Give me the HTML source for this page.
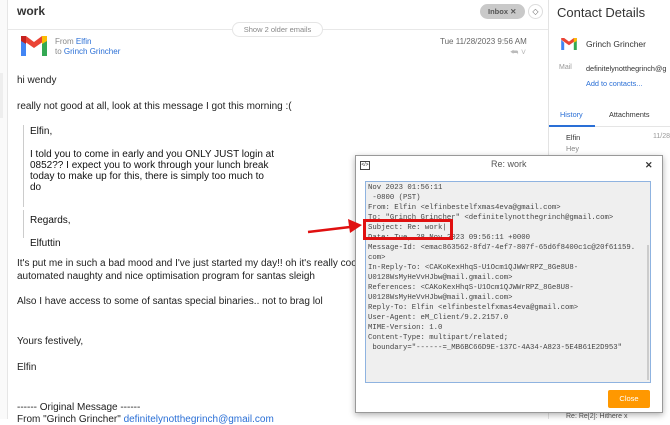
<!DOCTYPE html>
<html><head><meta charset="utf-8"><style>
*{margin:0;padding:0;box-sizing:border-box}
body{width:670px;height:419px;overflow:hidden;background:#fff;font-family:"Liberation Sans",sans-serif;position:relative;color:#222}
.a{position:absolute;white-space:nowrap}
.body{font-size:10px;color:#222}
.mono{font-family:"Liberation Mono",monospace;font-size:7.3px;line-height:10px;color:#444;white-space:pre}
a,.lnk{color:#2a6fd6}
</style></head><body>
<div class="a" style="left:0;top:0;width:8px;height:419px;border-right:1px solid #e6e6e6;background:#fafafa"></div>
<div class="a" style="left:0;top:73px;width:3px;height:45px;background:#eee"></div>
<div class="a" style="left:17px;top:4px;font-size:12px;font-weight:bold;color:#333">work</div>
<div class="a" style="left:8px;top:29px;width:540px;border-top:1px solid #e8e8e8"></div>
<div class="a" style="left:232px;top:22px;width:91px;height:15px;border:1px solid #e5e5e5;border-radius:8px;background:#fff;font-size:7.5px;color:#888;text-align:center;line-height:13px">Show 2 older emails</div>
<div class="a" style="left:480px;top:4px;width:45px;height:15px;border-radius:8px;background:#c9c9c9;font-size:7.5px;font-weight:bold;color:#555;line-height:15px;padding-left:8px">Inbox ✕</div>
<div class="a" style="left:528px;top:4px;width:15px;height:15px;border:1px solid #ddd;border-radius:8px;font-size:8px;text-align:center;line-height:13px;color:#666">◇</div>
<svg class="a" style="left:19px;top:35px" width="30" height="22" viewBox="0 0 30 22">
<path d="M2 4 L2 21 L7 21 L7 9 Z" fill="#4285f4"/><path d="M28 4 L28 21 L23 21 L23 9 Z" fill="#34a853"/>
<path d="M2 4 L15 13 L28 4 L28 1 L23 1 L15 7 L7 1 L2 1 Z" fill="#ea4335"/><path d="M23 1 L28 1 L28 6 L23 9 Z" fill="#fbbc04"/><path d="M2 1 L7 1 L7 9 L2 6Z" fill="#c5221f"/>
</svg>
<div class="a" style="left:55px;top:37px;font-size:8px;color:#888">From <span class="lnk">Elfin</span></div>
<div class="a" style="left:55px;top:47px;font-size:8px;color:#888">to <span class="lnk">Grinch Grincher</span></div>
<div class="a" style="left:440px;top:37px;font-size:8px;color:#666">Tue 11/28/2023 9:56 AM</div>
<div class="a" style="left:510px;top:47px;font-size:9px;color:#bbb">⮪ ˅</div>
<div class="a body" style="left:17px;top:75px">hi wendy</div>
<div class="a body" style="left:17px;top:101px">really not good at all, look at this message I got this morning :(</div>
<div class="a" style="left:23px;top:125px;width:1px;height:82px;background:#ccc"></div>
<div class="a" style="left:23px;top:210px;width:1px;height:28px;background:#ccc"></div>
<div class="a body" style="left:30px;top:126px;color:#111">Elfin,</div>
<div class="a body" style="left:30px;top:149px;color:#111;line-height:11px">I told you to come in early and you ONLY JUST login at<br>0852?? I expect you to work through your lunch break<br>today to make up for this, there is simply too much to<br>do</div>
<div class="a body" style="left:30px;top:215px;color:#111">Regards,</div>
<div class="a body" style="left:30px;top:238px;color:#111">Elfuttin</div>
<div class="a body" style="left:17px;top:257px;line-height:13px">It's put me in such a bad mood and I've just started my day!! oh it's really coo<br>automated naughty and nice optimisation program for santas sleigh</div>
<div class="a body" style="left:17px;top:296px">Also I have access to some of santas special binaries.. not to brag lol</div>
<div class="a body" style="left:17px;top:336px">Yours festively,</div>
<div class="a body" style="left:17px;top:362px">Elfin</div>
<div class="a body" style="left:17px;top:402px">------ Original Message ------</div>
<div class="a body" style="left:17px;top:414px">From "Grinch Grincher" <span class="lnk">definitelynotthegrinch@gmail.com</span></div>
<div class="a" style="left:548px;top:0;width:122px;height:419px;border-left:1px solid #e3e3e3;background:#fff"></div>
<div class="a" style="left:557px;top:5px;font-size:13px;color:#333">Contact Details</div>
<svg class="a" style="left:560px;top:37px" width="18" height="14" viewBox="0 0 30 22">
<path d="M2 4 L2 21 L7 21 L7 9 Z" fill="#4285f4"/><path d="M28 4 L28 21 L23 21 L23 9 Z" fill="#34a853"/>
<path d="M2 4 L15 13 L28 4 L28 1 L23 1 L15 7 L7 1 L2 1 Z" fill="#ea4335"/><path d="M23 1 L28 1 L28 6 L23 9 Z" fill="#fbbc04"/></svg>
<div class="a" style="left:586px;top:39px;font-size:8.5px;color:#333">Grinch Grincher</div>
<div class="a" style="left:559px;top:64px;font-size:7px;color:#999">Mail</div>
<div class="a" style="left:586px;top:64px;font-size:7.3px;color:#333">definitelynotthegrinch@g</div>
<div class="a" style="left:586px;top:79px;font-size:7.3px;color:#2a6fd6">Add to contacts...</div>
<div class="a" style="left:560px;top:110px;font-size:7.3px;color:#2a6fd6">History</div>
<div class="a" style="left:609px;top:110px;font-size:7.3px;color:#333">Attachments</div>
<div class="a" style="left:549px;top:126px;width:121px;border-top:1px solid #e5e5e5"></div>
<div class="a" style="left:549px;top:125px;width:46px;height:2px;background:#2a6fd6"></div>
<div class="a" style="left:566px;top:133px;font-size:7.3px;color:#333">Elfin</div>
<div class="a" style="left:566px;top:144px;font-size:7.3px;color:#888">Hey</div>
<div class="a" style="left:653px;top:133px;font-size:7px;color:#999">11/28/</div>
<div class="a" style="left:566px;top:413px;font-size:7px;color:#555">Re: Re[2]: Hithere x</div>
<div class="a" style="left:355px;top:155px;width:308px;height:258px;background:#fff;border:1px solid #999;box-shadow:0 2px 6px rgba(0,0,0,.3)"></div>
<div class="a" style="left:360px;top:161px;width:10px;height:9px;border:1px solid #444;font-size:5px;line-height:7px;text-align:center">&lt;/&gt;</div>
<div class="a" style="left:491px;top:159px;font-size:9px;color:#555">Re: work</div>
<div class="a" style="left:645px;top:160px;font-size:9px;color:#333;font-weight:bold">✕</div>
<div class="a" style="left:365px;top:181px;width:286px;height:202px;background:#efefef;border:1px solid #8fb3e0"></div>
<div class="a" style="left:647px;top:245px;width:2px;height:135px;background:#ccc"></div>
<div class="a mono" style="left:368px;top:183px">Nov 2023 01:56:11
 -0800 (PST)
From: Elfin &lt;elfinbestelfxmas4eva@gmail.com&gt;
To: "Grinch Grincher" &lt;definitelynotthegrinch@gmail.com&gt;
Subject: Re: work|
Date: Tue, 28 Nov 2023 09:56:11 +0000
Message-Id: &lt;emac863562-8fd7-4ef7-807f-65d6f8400c1c@20f61159.
com&gt;
In-Reply-To: &lt;CAKoKexHhqS-U1Ocm1QJWWrRPZ_8Ge8U8-
U0128WsMyHeVvHJbw@mail.gmail.com&gt;
References: &lt;CAKoKexHhqS-U1Ocm1QJWWrRPZ_8Ge8U8-
U0128WsMyHeVvHJbw@mail.gmail.com&gt;
Reply-To: Elfin &lt;elfinbestelfxmas4eva@gmail.com&gt;
User-Agent: eM_Client/9.2.2157.0
MIME-Version: 1.0
Content-Type: multipart/related;
 boundary="------=_MB6BC66D9E-137C-4A34-A823-5E4B61E2D953"</div>
<div class="a" style="left:363px;top:219px;width:90px;height:21px;border:3px solid #e01010"></div>
<div class="a" style="left:608px;top:390px;width:42px;height:18px;background:#ff9800;border-radius:2px;color:#fff;font-size:7.5px;text-align:center;line-height:18px">Close</div>
<svg class="a" style="left:300px;top:215px" width="65" height="25"><line x1="8" y1="17" x2="50" y2="12" stroke="#e01010" stroke-width="2.5"/><path d="M62 10 L48 4 L50 18 Z" fill="#e01010"/></svg>
</body></html>
